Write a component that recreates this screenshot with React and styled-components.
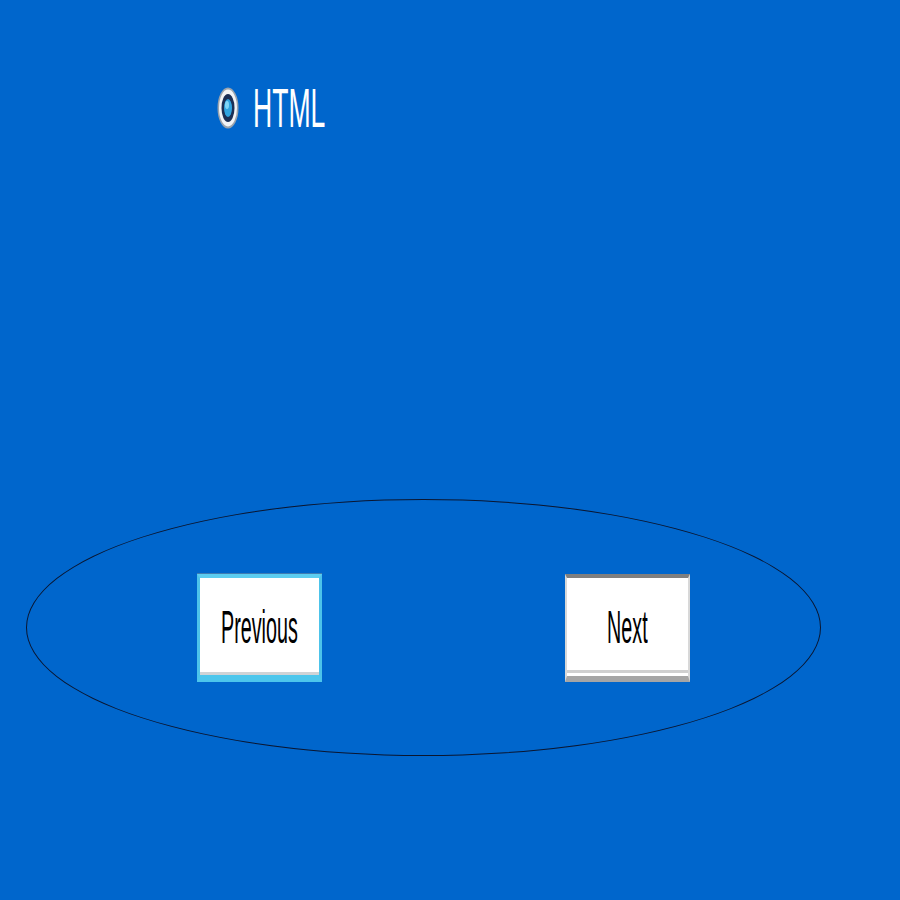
import React from "react";
import styled, { createGlobalStyle } from "styled-components";

const GlobalStyle = createGlobalStyle`
  html, body {
    margin: 0;
    padding: 0;
    background: #0066cc;
  }
  body {
    font-family: "Liberation Sans", Arial, sans-serif;
  }
`;

const Page = styled.div`
  min-height: 900px;
  padding-top: 87px;
  box-sizing: border-box;
  background: #0066cc;
`;

const OptionRow = styled.label`
  display: flex;
  align-items: center;
  gap: 14px;
  height: 42px;
  padding-left: 217px;
`;

const OptionText = styled.span`
  display: inline-block;
  color: #fff;
  font-size: 56px;
  line-height: 42px;
  transform: scaleX(0.475);
  transform-origin: left center;
  white-space: nowrap;
`;

const Oval = styled.div`
  box-sizing: border-box;
  width: 795px;
  height: 257px;
  margin: 370px 0 0 26px;
  border: 1px solid #0a1630;
  border-radius: 50%;
  display: flex;
  align-items: center;
  padding-left: 170px;
  gap: 243px;
`;

const NavButton = styled.button`
  box-sizing: border-box;
  width: 125px;
  height: 108px;
  padding: 0;
  background: #fff;
  display: flex;
  align-items: center;
  justify-content: center;
  cursor: pointer;
  border-style: solid;
  border-width: ${(p) => (p.$active ? "4px 3px 7px 3px" : "4px 2px 6px 2px")};
  border-color: ${(p) =>
    p.$active
      ? "#5ccdf0 #4cc3ea #4cc6ec #4cc3ea"
      : "#7f7f7f #d8d8d8 #a5a5a5 #d8d8d8"};
  box-shadow: ${(p) =>
    p.$active
      ? "0 -1px 0 #3f7db3, inset 0 -3px 0 #cfd3d6"
      : "inset 0 -3px 0 #fff, inset 0 -6px 0 #cfcfcf"};
`;

const ButtonLabel = styled.span`
  display: inline-block;
  color: #000;
  font-family: "Liberation Sans", Arial, sans-serif;
  font-size: 47px;
  line-height: 1;
  transform: scaleX(0.42);
  white-space: nowrap;
`;

const RadioIcon = () => (
  <svg width="22" height="42" viewBox="0 0 22 42">
    <ellipse cx="11" cy="21" rx="10.5" ry="20.5" fill="#9aa3ad" />
    <ellipse cx="11" cy="21" rx="9" ry="18.5" fill="#f2f4f6" />
    <ellipse cx="11" cy="21" rx="6.5" ry="14" fill="#1b2f55" />
    <ellipse cx="11" cy="21" rx="4" ry="9" fill="#2fa4e0" />
    <ellipse cx="10" cy="18" rx="2" ry="4" fill="#7fd6f7" />
  </svg>
);

export default function App() {
  return (
    <Page>
      <GlobalStyle />
      <OptionRow>
        <RadioIcon />
        <OptionText>HTML</OptionText>
      </OptionRow>
      <Oval>
        <NavButton $active>
          <ButtonLabel>Previous</ButtonLabel>
        </NavButton>
        <NavButton>
          <ButtonLabel>Next</ButtonLabel>
        </NavButton>
      </Oval>
    </Page>
  );
}
